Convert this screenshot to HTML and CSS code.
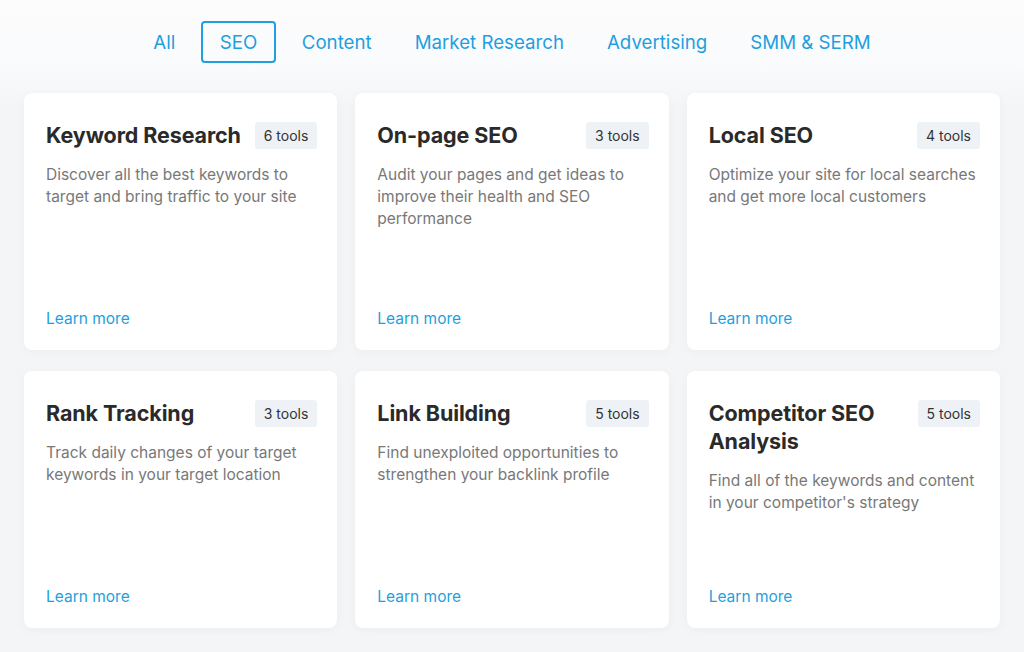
FILE: index.html
```html
<!DOCTYPE html>
<html>
<head>
<meta charset="utf-8">
<link rel="stylesheet" href="styles.css">
</head>
<body>
<nav class="tabs">
  <a class="tab">All</a>
  <a class="tab active">SEO</a>
  <a class="tab">Content</a>
  <a class="tab">Market Research</a>
  <a class="tab">Advertising</a>
  <a class="tab">SMM &amp; SERM</a>
</nav>
<main class="grid">
  <section class="card">
    <div class="head"><h2>Keyword Research</h2><span class="badge">6 tools</span></div>
    <p class="desc">Discover all the best keywords to target and bring traffic to your site</p>
    <a class="more">Learn more</a>
  </section>
  <section class="card">
    <div class="head"><h2>On-page SEO</h2><span class="badge">3 tools</span></div>
    <p class="desc">Audit your pages and get ideas to improve their health and SEO performance</p>
    <a class="more">Learn more</a>
  </section>
  <section class="card">
    <div class="head"><h2>Local SEO</h2><span class="badge">4 tools</span></div>
    <p class="desc">Optimize your site for local searches and get more local customers</p>
    <a class="more">Learn more</a>
  </section>
  <section class="card">
    <div class="head"><h2>Rank Tracking</h2><span class="badge">3 tools</span></div>
    <p class="desc">Track daily changes of your target keywords in your target location</p>
    <a class="more">Learn more</a>
  </section>
  <section class="card">
    <div class="head"><h2>Link Building</h2><span class="badge">5 tools</span></div>
    <p class="desc">Find unexploited opportunities to strengthen your backlink profile</p>
    <a class="more">Learn more</a>
  </section>
  <section class="card">
    <div class="head"><h2>Competitor SEO Analysis</h2><span class="badge">5 tools</span></div>
    <p class="desc">Find all of the keywords and content in your competitor's strategy</p>
    <a class="more">Learn more</a>
  </section>
</main>
</body>
</html>
```
FILE: styles.css
```css
* { box-sizing: border-box; }
html, body { margin: 0; padding: 0; }
body {
  width: 1024px;
  height: 652px;
  overflow: hidden;
  font-family: Inter, "Noto Sans", sans-serif;
  background: linear-gradient(to bottom, #fcfcfd 0px, #fafbfc 60px, #f4f5f7 110px, #f4f5f7 100%);
}
.tabs {
  display: flex;
  justify-content: center;
  align-items: center;
  padding-top: 21px;
  height: 63px;
}
.tab {
  display: block;
  font-size: 18.7px;
  color: #1f9fdf;
  padding: 0 19.5px;
  height: 42px;
  line-height: 39px;
  border: 2px solid transparent;
  border-radius: 4px;
  cursor: pointer;
}
.tab.active {
  border-color: #1f9fdf;
  padding: 0 17px;
  margin: 0 4px;
}
.grid {
  display: grid;
  grid-template-columns: repeat(3, 1fr);
  grid-template-rows: repeat(2, 257px);
  column-gap: 18px;
  row-gap: 21px;
  margin: 30px 24px 0 24px;
}
.card {
  background: #fff;
  border-radius: 8px;
  box-shadow: 0 2px 10px rgba(30, 40, 60, 0.04);
  padding: 28px 20px 20px 22px;
  display: flex;
  flex-direction: column;
}
.head {
  display: flex;
  justify-content: space-between;
  align-items: flex-start;
  gap: 12px;
}
.head h2 {
  margin: 0;
  font-size: 21.5px;
  line-height: 28px;
  font-weight: 700;
  color: #2a2a2a;
  letter-spacing: -0.1px;
}
.badge {
  flex: none;
  background: #eef2f6;
  color: #333;
  font-size: 14px;
  height: 27px;
  line-height: 27px;
  padding: 0 9px;
  border-radius: 3px;
  margin-top: 1px;
}
.desc {
  margin: 15px 0 0;
  font-size: 15.5px;
  line-height: 22px;
  color: #787878;
  flex: 1;
}
.more {
  font-size: 15.5px;
  line-height: 22px;
  color: #1f9fdc;
  cursor: pointer;
}
```
